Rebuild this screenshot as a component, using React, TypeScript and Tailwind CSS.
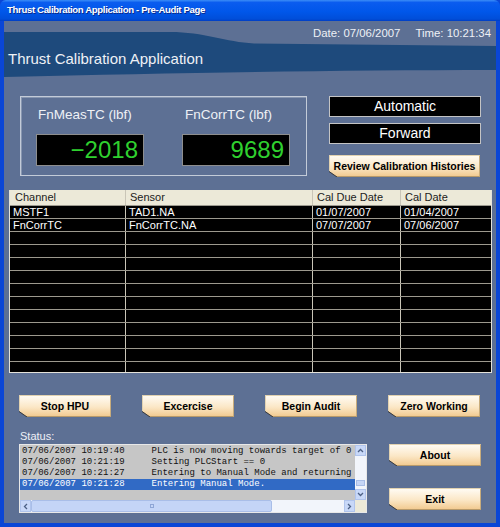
import React from 'react';

const rows = [
  { channel: 'MSTF1', sensor: 'TAD1.NA', due: '01/07/2007', cal: '01/04/2007' },
  { channel: 'FnCorrTC', sensor: 'FnCorrTC.NA', due: '07/07/2007', cal: '07/06/2007' },
];

const log = [
  '07/06/2007 10:19:40     PLC is now moving towards target of 0',
  '07/06/2007 10:21:19     Setting PLCStart == 0',
  '07/06/2007 10:21:27     Entering to Manual Mode and returning',
  '07/06/2007 10:21:28     Entering Manual Mode.',
];

// beige push button with the dog-eared lower left corner
const Btn: React.FC<{ label: string; className?: string }> = ({ label, className = '' }) => (
  <button
    className={`relative h-[22px] border border-[#e2d2b0] border-b-[#b89a6a] border-r-[#c8ac7c] bg-[linear-gradient(#fffbf3_0%,#fbe7c6_55%,#f2cb92_100%)] text-[10.5px] font-bold text-black leading-none ${className}`}
  >
    {label}
    <svg className="absolute left-[-1px] bottom-[-1px]" width="8" height="6" viewBox="0 0 8 6">
      <polygon points="0,0 8,6 0,6" fill="#5d7094" />
      <line x1="0" y1="0.5" x2="8" y2="6" stroke="#3a3a3a" strokeWidth="1" />
    </svg>
  </button>
);

export default function App() {
  const blank = Array.from({ length: 10 });

  return (
    <div className="w-[500px] h-[527px] flex flex-col bg-[#0a46d6] font-['Liberation_Sans',Arial,sans-serif] overflow-hidden">
      {/* XP title bar */}
      <div className="h-[21px] flex items-center pl-[7px] bg-[linear-gradient(#3b8df7_0%,#0a5cef_12%,#0057ea_55%,#004ed9_90%,#003ec4_100%)] rounded-t-[6px]">
        <span className="text-white font-bold text-[9.6px] tracking-[-0.35px] [text-shadow:1px_1px_0_#0a2a8a]">
          Thrust Calibration Application - Pre-Audit Page
        </span>
      </div>

      <div className="flex-1 mx-[4px] mb-[4px] bg-[#5d7094] flex flex-col">
        {/* header band */}
        <div className="relative h-[58px]">
          <svg className="absolute inset-0" width="492" height="58" viewBox="0 0 492 58">
            <path d="M0 11 L166 11 C200 11 222 21 250 22.5 L492 25 L492 49 C330 49 180 52 0 56 Z" fill="#1e4a7c" />
          </svg>
          <div className="relative flex flex-col">
            <div className="flex justify-end gap-[15px] pr-[5px] pt-[5px] text-[11.4px] leading-[14px] text-[#eef1f6]">
              <span>Date: 07/06/2007</span>
              <span>Time: 10:21:34</span>
            </div>
            <div className="pl-[4px] mt-[10px] text-[15px] leading-[18px] text-[#eef1f6]">
              Thrust Calibration Application
            </div>
          </div>
        </div>

        {/* readouts + mode */}
        <div className="flex mt-[17px]">
          <div className="ml-[16px] w-[287px] h-[80px] border border-[#c3cbd8] shadow-[inset_1px_1px_0_#8796b0] flex gap-[38px] pl-[15px] pt-[10px]">
            <div className="w-[108px]">
              <div className="pl-[2px] text-[13.5px] leading-[16px] text-[#eef1f6]">FnMeasTC (lbf)</div>
              <div className="mt-[11px] h-[32px] bg-black border border-[#8e8e8e] text-right pr-[5px] text-[24px] leading-[30px] text-[#2fd02f]">
                −2018
              </div>
            </div>
            <div className="w-[108px]">
              <div className="pl-[3px] text-[13.5px] leading-[16px] text-[#eef1f6]">FnCorrTC (lbf)</div>
              <div className="mt-[11px] h-[32px] bg-black border border-[#8e8e8e] text-right pr-[5px] text-[24px] leading-[30px] text-[#2fd02f]">
                9689
              </div>
            </div>
          </div>
          <div className="ml-[22px] w-[152px] flex flex-col">
            <div className="h-[21px] bg-black border border-[#c4c4c4] flex items-center justify-center text-[14px] text-white">
              Automatic
            </div>
            <div className="mt-[6px] h-[21px] bg-black border border-[#c4c4c4] flex items-center justify-center text-[14px] text-white">
              Forward
            </div>
            <Btn label="Review Calibration Histories" className="mt-[11px] w-[151px]" />
          </div>
        </div>

        {/* calibration table */}
        <div className="mt-[13px] ml-[5px] w-[483px] border-l border-b border-r border-[#e4e2da] bg-black text-[11px]">
          <div className="flex h-[16px] bg-[#ece9d8] border-b border-[#9c998e] text-[#1c1c1c] leading-[15px]">
            <div className="w-[116px] pl-[5px] border-r border-[#c9c5b7]">Channel</div>
            <div className="w-[187px] pl-[4px] border-r border-[#c9c5b7]">Sensor</div>
            <div className="w-[88px] pl-[4px] border-r border-[#c9c5b7]">Cal Due Date</div>
            <div className="flex-1 pl-[4px]">Cal Date</div>
          </div>
          {rows.map((r) => (
            <div key={r.channel} className="flex h-[13px] border-b border-[#9c998e] text-white leading-[12px]">
              <div className="w-[116px] pl-[3px] border-r border-[#c9c5b7]">{r.channel}</div>
              <div className="w-[187px] pl-[3px] border-r border-[#c9c5b7]">{r.sensor}</div>
              <div className="w-[88px] pl-[3px] border-r border-[#c9c5b7]">{r.due}</div>
              <div className="flex-1 pl-[3px]">{r.cal}</div>
            </div>
          ))}
          {blank.map((_, i) => (
            <div key={i} className="flex h-[13px] border-b border-[#9c998e]">
              <div className="w-[116px] border-r border-[#c9c5b7]" />
              <div className="w-[187px] border-r border-[#c9c5b7]" />
              <div className="w-[88px] border-r border-[#c9c5b7]" />
              <div className="flex-1" />
            </div>
          ))}
          <div className="flex h-[10px]">
            <div className="w-[116px] border-r border-[#c9c5b7]" />
            <div className="w-[187px] border-r border-[#c9c5b7]" />
            <div className="w-[88px] border-r border-[#c9c5b7]" />
            <div className="flex-1" />
          </div>
        </div>

        {/* action buttons */}
        <div className="flex gap-[31px] pl-[15px] mt-[22px]">
          <Btn label="Stop HPU" className="w-[92px]" />
          <Btn label="Excercise" className="w-[92px]" />
          <Btn label="Begin Audit" className="w-[92px]" />
          <Btn label="Zero Working" className="w-[92px]" />
        </div>

        <div className="pl-[16px] mt-[13px] text-[11px] leading-[12px] text-[#eef1f6]">Status:</div>

        <div className="flex mt-[2px]">
          {/* status log */}
          <div className="ml-[15px] w-[348px] h-[69px] border border-[#e8e8e8] bg-[#c6c6c6] flex flex-col">
            <div className="flex flex-1">
              <div className="flex-1 pt-[1px] overflow-hidden font-['Liberation_Mono','Courier_New',monospace] text-[9px] whitespace-pre">
                {log.map((l, i) => (
                  <div
                    key={i}
                    className={`h-[11px] leading-[11px] pl-[2px] ${i === 3 ? 'bg-[#316ac5] text-white' : 'text-[#111]'}`}
                  >
                    {l}
                  </div>
                ))}
              </div>
              <div className="w-[11px] flex flex-col bg-[#f2f5fb]">
                <div className="h-[11px] bg-[#c8d8f8] border border-[#b0c4ec] flex items-center justify-center">
                  <svg width="7" height="5" viewBox="0 0 7 5">
                    <path d="M1 4 L3.5 1.5 L6 4" fill="none" stroke="#4d6185" strokeWidth="1.3" />
                  </svg>
                </div>
                <div className="flex-1" />
                <div className="h-[6px] mx-[1px] bg-[#c6d6f6] border border-[#a8bde6] mb-[3px]" />
                <div className="h-[11px] bg-[#c8d8f8] border border-[#b0c4ec] flex items-center justify-center">
                  <svg width="7" height="5" viewBox="0 0 7 5">
                    <path d="M1 1 L3.5 3.5 L6 1" fill="none" stroke="#4d6185" strokeWidth="1.3" />
                  </svg>
                </div>
              </div>
            </div>
            <div className="flex h-[12px]">
              <div className="flex-1 flex bg-[#f2f5fb]">
                <div className="w-[11px] bg-[#c8d8f8] border border-[#b0c4ec] flex items-center justify-center">
                  <svg width="5" height="7" viewBox="0 0 5 7">
                    <path d="M4 1 L1.5 3.5 L4 6" fill="none" stroke="#4d6185" strokeWidth="1.3" />
                  </svg>
                </div>
                <div className="w-[241px] bg-[#c4d5f7] border border-[#a9bee8] rounded-[2px] flex items-center justify-center">
                  <div className="w-[4px] h-[4px] border border-[#8ea6d6]" />
                </div>
                <div className="flex-1" />
                <div className="w-[11px] bg-[#c8d8f8] border border-[#b0c4ec] flex items-center justify-center">
                  <svg width="5" height="7" viewBox="0 0 5 7">
                    <path d="M1 1 L3.5 3.5 L1 6" fill="none" stroke="#4d6185" strokeWidth="1.3" />
                  </svg>
                </div>
              </div>
              <div className="w-[11px] bg-[#ece9d8]" />
            </div>
          </div>

          <div className="ml-[22px] w-[92px] flex flex-col">
            <Btn label="About" className="w-[92px]" />
            <Btn label="Exit" className="w-[92px] mt-[22px]" />
          </div>
        </div>
      </div>
    </div>
  );
}
